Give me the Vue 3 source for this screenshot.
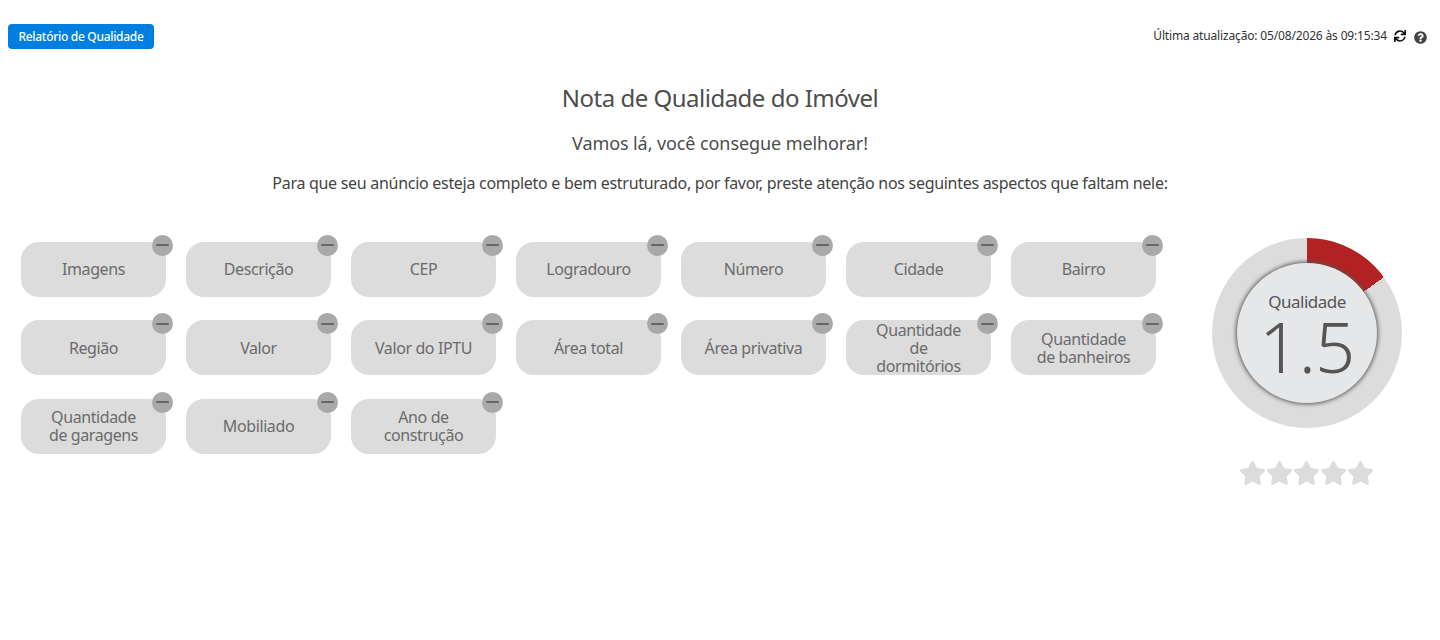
<script setup>
const items = ['Imagens','Descrição','CEP','Logradouro','Número','Cidade','Bairro','Região','Valor','Valor do IPTU','Área total','Área privativa','Quantidade de dormitórios','Quantidade de banheiros','Quantidade de garagens','Mobiliado','Ano de construção']
const stars = [1,2,3,4,5]
</script>

<template>
  <div class="page">
    <header class="top">
      <button class="report">Relatório de Qualidade</button>
      <div class="status">
        <span>Última atualização: 05/08/2026 às 09:15:34</span>
        <svg class="sync" viewBox="0 0 512 512"><path d="M440.65 12.57l4 82.77A247.16 247.16 0 0 0 255.83 8C134.73 8 33.91 94.92 12.29 209.82A12 12 0 0 0 24.09 224h49.05a12 12 0 0 0 11.67-9.26 175.91 175.91 0 0 1 317-56.94l-101.46-4.86a12 12 0 0 0-12.57 12v47.41a12 12 0 0 0 12 12H500a12 12 0 0 0 12-12V12a12 12 0 0 0-12-12h-47.37a12 12 0 0 0-11.98 12.57zM255.83 432a175.61 175.61 0 0 1-146-77.8l101.8 4.87a12 12 0 0 0 12.57-12v-47.4a12 12 0 0 0-12-12H12a12 12 0 0 0-12 12V500a12 12 0 0 0 12 12h47.35a12 12 0 0 0 12-12.6l-4.15-82.57A247.17 247.17 0 0 0 255.83 504c121.11 0 221.93-86.92 243.55-201.82a12 12 0 0 0-11.8-14.18h-49.05a12 12 0 0 0-11.67 9.26A175.86 175.86 0 0 1 255.83 432z"/></svg>
        <svg class="help" viewBox="0 0 512 512"><path d="M504 256c0 136.997-111.043 248-248 248S8 392.997 8 256C8 119.083 119.043 8 256 8s248 111.083 248 248zM262.655 90c-54.497 0-89.255 22.957-116.549 63.758-3.536 5.286-2.353 12.415 2.715 16.258l34.699 26.31c5.205 3.947 12.621 3.008 16.665-2.122 17.864-22.658 30.113-35.797 57.303-35.797 20.429 0 45.698 13.148 45.698 32.958 0 14.976-12.363 22.667-32.534 33.976C247.128 238.528 216 254.941 216 296v4c0 6.627 5.373 12 12 12h56c6.627 0 12-5.373 12-12v-1.333c0-28.462 83.186-29.647 83.186-106.667 0-58.002-60.165-102-116.531-102zM256 338c-25.365 0-46 20.635-46 46 0 25.364 20.635 46 46 46s46-20.636 46-46c0-25.365-20.635-46-46-46z"/></svg>
      </div>
    </header>

    <section class="intro">
      <h1>Nota de Qualidade do Imóvel</h1>
      <h2>Vamos lá, você consegue melhorar!</h2>
      <p>Para que seu anúncio esteja completo e bem estruturado, por favor, preste atenção nos seguintes aspectos que faltam nele:</p>
    </section>

    <section class="body">
      <div class="chips">
        <div v-for="item in items" :key="item" class="chip">
          <span class="label">{{ item }}</span>
          <span class="badge"><i></i></span>
        </div>
      </div>
      <aside class="score">
        <div class="ring">
          <div class="core">
            <span class="core-label">Qualidade</span>
            <span class="core-value">1.5</span>
          </div>
        </div>
        <div class="stars">
          <svg v-for="s in stars" :key="s" viewBox="0 0 576 512"><path d="M259.3 17.8L194 150.2 47.9 171.5c-26.2 3.8-36.7 36.1-17.7 54.6l105.7 103-25 145.5c-4.5 26.3 23.2 46 46.4 33.7L288 439.6l130.7 68.7c23.2 12.2 50.9-7.4 46.4-33.7l-25-145.5 105.7-103c19-18.5 8.5-50.8-17.7-54.6L382 150.2 316.7 17.8c-11.7-23.6-45.6-23.9-57.4 0z"/></svg>
        </div>
      </aside>
    </section>
  </div>
</template>

<style>
html, body { background: #fff; }
</style>

<style scoped>
.page {
  height: 640px;
  overflow: hidden;
  box-sizing: border-box;
  padding-top: 24px;
  font-family: "Noto Sans", "Open Sans", sans-serif;
  color: #4a4a4a;
}
.top {
  display: flex;
  justify-content: space-between;
  align-items: flex-start;
  padding: 0 13px 0 8px;
}
.report {
  width: 146px;
  height: 25px;
  padding: 0;
  border: 0;
  border-radius: 4px;
  background: #007fe0;
  color: #fff;
  font: 500 12px "Noto Sans", sans-serif;
  letter-spacing: -0.3px;
}
.status {
  display: flex;
  align-items: center;
  font-size: 12px;
  letter-spacing: -0.16px;
  height: 23px;
  color: #333;
}
.sync { width: 12px; height: 12px; margin-left: 7px; fill: #111; }
.help { width: 13px; height: 13px; margin-left: 8px; margin-top: 3px; fill: #444; }
.intro { text-align: center; margin-top: 32px; }
h1 { margin: 0; font-size: 24px; line-height: 34px; font-weight: 400; letter-spacing: -0.5px; color: #4d4d4d; }
h2 { margin: 15px 0 0; font-size: 18px; line-height: 26px; font-weight: 400; letter-spacing: -0.09px; color: #4d4d4d; }
p { margin: 15px 0 0; font-size: 16px; line-height: 24px; letter-spacing: -0.29px; color: #444; }
.body {
  display: flex;
  margin-top: 42.6px;
  padding: 4px 0 0 21px;
}
.chips {
  width: 1155px;
  flex: none;
  display: grid;
  grid-template-columns: repeat(7, 145px);
  grid-auto-rows: 55px;
  column-gap: 20px;
  row-gap: 23.5px;
  align-content: start;
}
.chip {
  position: relative;
  display: flex;
  align-items: center;
  justify-content: center;
  text-align: center;
  background: #dcdcdc;
  border-radius: 18px;
  padding: 0 20px;
  font-size: 16px;
  line-height: 18px;
  letter-spacing: -0.4px;
  color: #6b6b6b;
}
.badge {
  position: absolute;
  top: -7px;
  right: -7px;
  width: 21px;
  height: 21px;
  border-radius: 50%;
  background: #a9a9aa;
  display: flex;
  align-items: center;
  justify-content: center;
}
.badge i { width: 13px; height: 2px; border-radius: 1px; background: #666; }
.score {
  margin-left: 36px;
  margin-top: -3.6px;
  display: flex;
  flex-direction: column;
  align-items: center;
  width: 190px;
}
.ring {
  width: 190px;
  height: 190px;
  border-radius: 50%;
  background: conic-gradient(#b22222 0 54deg, #dcdcdc 54deg 360deg);
  display: flex;
  align-items: center;
  justify-content: center;
}
.core {
  width: 140px;
  height: 140px;
  border-radius: 50%;
  background: #e6e7e9;
  box-shadow: 0 0 4px 1px #555;
  display: flex;
  flex-direction: column;
  align-items: center;
  color: #555;
}
.core-label { font-size: 17px; line-height: 20px; margin-top: 29px; letter-spacing: -0.5px; }
.core-value { font-size: 70px; line-height: 62px; font-weight: 350; letter-spacing: -0.5px; margin-top: 3px; }
.stars { display: flex; margin-top: 33px; margin-right: 1px; }
.stars svg { width: 27px; height: 24px; fill: #dcdcdc; }
</style>
